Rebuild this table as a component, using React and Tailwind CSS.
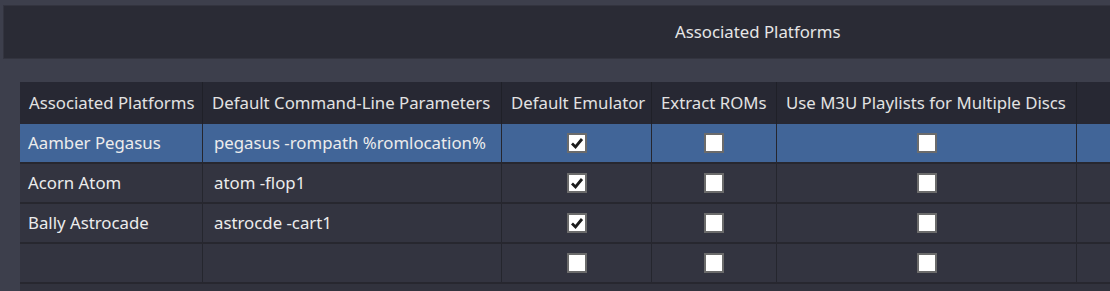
const cols = [
  { title: "Associated Platforms", w: "w-[183px]" },
  { title: "Default Command-Line Parameters", w: "w-[299px]" },
  { title: "Default Emulator", w: "w-[150px]" },
  { title: "Extract ROMs", w: "w-[125px]" },
  { title: "Use M3U Playlists for Multiple Discs", w: "w-[300px]" },
];

const rows = [
  { name: "Aamber Pegasus", params: "pegasus -rompath %romlocation%", emu: true, selected: true },
  { name: "Acorn Atom", params: "atom -flop1", emu: true },
  { name: "Bally Astrocade", params: "astrocde -cart1", emu: true },
  { name: "", params: "", emu: false },
];

function Check({ checked }) {
  return (
    <div className="w-[20px] h-[20px] border-2 border-[#6b6b6b] bg-white flex items-center justify-center">
      {checked && (
        <svg width="14" height="14" viewBox="0 0 14 14">
          <path d="M2 7.5 L5.5 11 L12 3" fill="none" stroke="#1c1c1c" strokeWidth="2.8" />
        </svg>
      )}
    </div>
  );
}

export default function App() {
  return (
    <div
      className="w-[1110px] h-[291px] overflow-hidden bg-[#3d3f4c] pt-[5px]"
      style={{ fontFamily: '"Noto Sans", "Open Sans", sans-serif' }}
    >
      {/* title band */}
      <div className="ml-[3px] h-[54px] w-[1200px] bg-[#2a2b35] border border-[#33343f] flex items-center pl-[671px] text-[16.8px] text-[#e6e6e6]">
        Associated Platforms
      </div>

      {/* table */}
      <div className="mt-[23px] ml-[20px] w-[1200px] h-[300px] bg-[#31323d]">
        <div className="flex h-[42px] bg-[#272833] text-[16.8px] text-[#e2e2e2]">
          {cols.map((c) => (
            <div key={c.title} className={`${c.w} shrink-0 flex items-center pl-[9px] border-r border-[#1f2028] whitespace-nowrap`}>
              {c.title}
            </div>
          ))}
          <div className="flex-1" />
        </div>

        {rows.map((r, i) => (
          <div
            key={i}
            className={`flex h-[40px] border-b-2 border-[#27272f] text-[16.8px] text-[#ececec] ${r.selected ? "bg-[#416598]" : "bg-[#333440]"}`}
          >
            <div className="w-[183px] shrink-0 flex items-center pl-[8px] border-r border-[#25262e]">{r.name}</div>
            <div className="w-[299px] shrink-0 flex items-center pl-[11px] border-r border-[#25262e] whitespace-nowrap">{r.params}</div>
            <div className="w-[150px] shrink-0 flex items-center justify-center border-r border-[#25262e]">
              <Check checked={r.emu} />
            </div>
            <div className="w-[125px] shrink-0 flex items-center justify-center border-r border-[#25262e]">
              <Check checked={false} />
            </div>
            <div className="w-[300px] shrink-0 flex items-center justify-center border-r border-[#25262e]">
              <Check checked={false} />
            </div>
            <div className="flex-1" />
          </div>
        ))}
      </div>
    </div>
  );
}
